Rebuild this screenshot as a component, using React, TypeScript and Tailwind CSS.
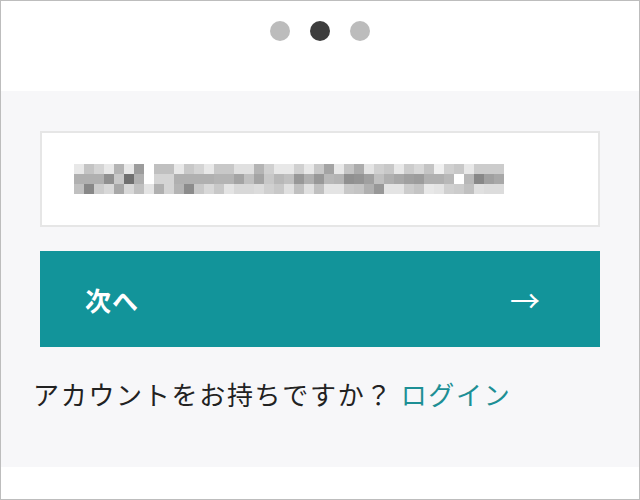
const rows: string[][] = [
  "e8,c4,d4,e8,b4,e8,9c,ff,c0,c0,e8,c8,d4,e8,c8,c8,e0,e0,b4,d0,e8,e8,d0,e8,c8,a4,e8,c4,ac,e4,d0,c8,e8,cc,d8,c4,f0,d0,c8,e8,cc,cc,cc".split(","),
  "b0,b0,b0,90,c8,70,b0,ff,d4,d4,b0,b0,b0,b0,b4,b4,a4,c0,a4,c8,b8,c0,98,b0,98,b8,b4,90,94,a0,c0,b0,a8,a0,9c,b0,b0,b8,ff,b8,88,a0,a8".split(","),
  "c0,88,cc,d8,a8,d8,c0,e4,b0,d4,b4,8c,c8,d8,c8,e4,d8,d8,dc,d0,c8,e0,c0,e0,c0,e4,e4,c8,c4,b0,98,e4,e4,cc,c4,e8,e4,d0,cc,c0,e0,dc,dc".split(","),
];

// pixelated (masked) email address
function Mosaic() {
  return (
    <svg width="430" height="30" viewBox="0 0 430 30" aria-label="masked email">
      {rows.map((row, y) =>
        row.map((v, x) => (
          <rect key={`${x}-${y}`} x={x * 10} y={y * 10} width="10" height="10" fill={`#${v}${v}${v}`} />
        ))
      )}
    </svg>
  );
}

export default function App() {
  return (
    <div
      className="flex h-[500px] w-[640px] flex-col border border-[#bdbdbd] bg-white"
      style={{ fontFamily: '"Noto Sans CJK JP", "Noto Sans", sans-serif' }}
    >
      <header className="flex h-[90px] shrink-0 justify-center gap-5 pt-5">
        <span className="h-5 w-5 rounded-full bg-[#bcbcbc]" />
        <span className="h-5 w-5 rounded-full bg-[#3d3d3d]" />
        <span className="h-5 w-5 rounded-full bg-[#bcbcbc]" />
      </header>

      <main className="flex h-[376px] shrink-0 flex-col bg-[#f7f7f9] px-[39px] pt-10">
        <div className="flex h-[96px] items-center border-2 border-[#e6e6e6] bg-white pl-[32px]">
          <Mosaic />
        </div>

        <button
          type="button"
          className="mt-6 flex h-[96px] items-center justify-between bg-[#12949a] pl-[45px] pr-[60px] text-white"
        >
          <span className="text-[26px] font-bold tracking-[1px]">次へ</span>
          <span className="text-[30px] leading-none">→</span>
        </button>

        <p className="mt-[28px] -ml-[7px] text-[26px] leading-[38px] tracking-[1.7px] text-[#222]">
          アカウントをお持ちですか？ <a className="text-[#1d8f95]">ログイン</a>
        </p>
      </main>
    </div>
  );
}
